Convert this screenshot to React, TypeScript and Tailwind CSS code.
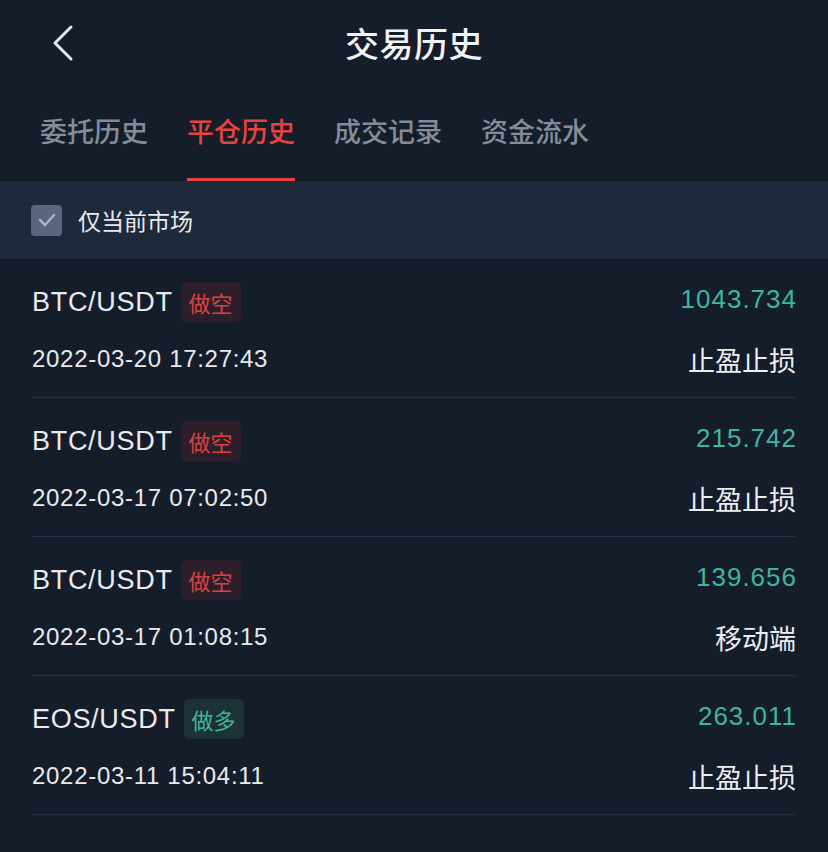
import React from "react";

type Row = {
  pair: string;
  side: "short" | "long";
  time: string;
  value: string;
  source: string;
};

const rows: Row[] = [
  { pair: "BTC/USDT", side: "short", time: "2022-03-20 17:27:43", value: "1043.734", source: "止盈止损" },
  { pair: "BTC/USDT", side: "short", time: "2022-03-17 07:02:50", value: "215.742", source: "止盈止损" },
  { pair: "BTC/USDT", side: "short", time: "2022-03-17 01:08:15", value: "139.656", source: "移动端" },
  { pair: "EOS/USDT", side: "long", time: "2022-03-11 15:04:11", value: "263.011", source: "止盈止损" },
];

const cjk = "font-['Noto_Sans_CJK_SC',sans-serif]";
const latin = "font-['Liberation_Sans','Noto_Sans_CJK_SC',sans-serif]";

export default function App() {
  const tabs = ["委托历史", "平仓历史", "成交记录", "资金流水"];
  return (
    <div className={`w-[828px] h-[852px] bg-[#151d2b] text-[#e8eaee] overflow-hidden ${cjk}`}>
      {/* Header */}
      <div className="relative h-[86px] flex items-center justify-center">
        <svg className="absolute left-[50px] top-[24px]" width="26" height="38" viewBox="0 0 26 38" fill="none">
          <path d="M21 3 L5 19 L21 35" stroke="#e6e8ec" strokeWidth="3" strokeLinecap="round" strokeLinejoin="round" />
        </svg>
        <div className="text-[34px] font-medium text-[#f2f3f5] leading-none tracking-[0.5px]">交易历史</div>
      </div>

      {/* Tabs */}
      <div className="h-[95px] flex pl-[40px] gap-[39px]">
        {tabs.map((t, i) => (
          <div key={t} className="flex flex-col w-[108px]">
            <div
              className={`h-[86px] pt-[28px] text-[27px] leading-[34px] text-center font-medium ${
                i === 1 ? "text-[#e5433f]" : "text-[#858c99]"
              }`}
            >
              {t}
            </div>
            <div className={`mt-auto h-[3px] ${i === 1 ? "bg-[#e5433f]" : ""}`} />
          </div>
        ))}
      </div>

      {/* Filter band */}
      <div className="h-[78px] bg-[#1e293c] flex items-center pl-[31px] gap-[16px]">
        <div className="w-[31px] h-[31px] rounded-[4px] bg-[#5a6680] flex items-center justify-center">
          <svg width="18" height="14" viewBox="0 0 18 14" fill="none">
            <path d="M2 7 L7 12 L16 2" stroke="#aab2c2" strokeWidth="2.5" strokeLinecap="round" strokeLinejoin="round" />
          </svg>
        </div>
        <div className="text-[23px] text-[#e8eaee] leading-none">仅当前市场</div>
      </div>

      {/* List */}
      <div className="px-[32px]">
        {rows.map((r, i) => (
          <div key={i} className="h-[139px] border-b border-[#253042] flex flex-col">
            <div className="mt-[23px] h-[40px] flex items-center justify-between">
              <div className="flex items-center gap-[8px]">
                <span className={`${latin} text-[27px] text-[#e8eaee] leading-none tracking-[0.7px]`}>{r.pair}</span>
                <span
                  className={`h-[40px] w-[60px] rounded-[5px] flex items-center justify-center text-[22px] leading-none ${
                    r.side === "short" ? "bg-[#2c1f2b] text-[#d8423f]" : "bg-[#1b3236] text-[#3fb69b]"
                  }`}
                >
                  {r.side === "short" ? "做空" : "做多"}
                </span>
              </div>
              <span className={`${latin} text-[26px] text-[#3fb69b] leading-none -mt-[6px] tracking-[1px] -mr-[1px]`}>
                {r.value}
              </span>
            </div>
            <div className="mt-[22px] h-[30px] flex items-center justify-between">
              <span className={`${latin} text-[24px] text-[#e8eaee] leading-none tracking-[0.7px]`}>{r.time}</span>
              <span className="text-[27px] text-[#eceef1] leading-none">{r.source}</span>
            </div>
          </div>
        ))}
      </div>
    </div>
  );
}
